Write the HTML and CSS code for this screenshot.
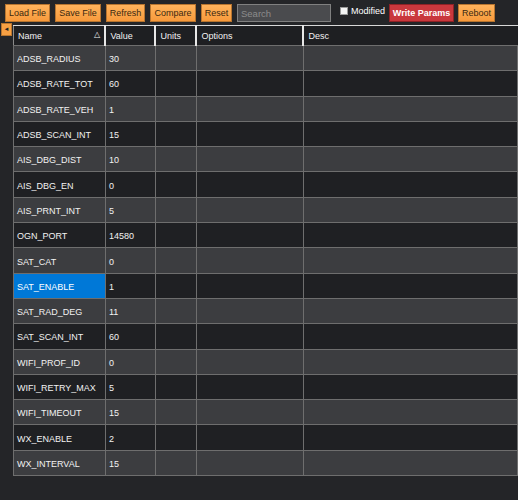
FILE: index.html
```html
<!DOCTYPE html>
<html lang="en">
<head>
    <meta charset="UTF-8">
    <meta name="viewport" content="width=device-width, initial-scale=1.0">
    <title>Full Parameter List</title>
    <link rel="stylesheet" href="styles.css">
</head>
<body>
    <div class="toolbar">
        <button class="btn btn-load">Load File</button>
        <button class="btn btn-save">Save File</button>
        <button class="btn btn-refresh">Refresh</button>
        <button class="btn btn-compare">Compare</button>
        <button class="btn btn-reset">Reset</button>
        <input type="text" class="search" placeholder="Search">
        <label class="modified"><span class="check"></span>Modified</label>
        <button class="btn btn-write">Write Params</button>
        <button class="btn btn-reboot">Reboot</button>
    </div>

    <div class="grid-area">
        <button class="collapse">&#9668;</button>
        <table class="params">
            <colgroup>
                <col class="col-name">
                <col class="col-value">
                <col class="col-units">
                <col class="col-options">
                <col>
            </colgroup>
            <thead>
                <tr>
                    <th class="sorted">Name <span class="sort">&#9651;</span></th>
                    <th>Value</th>
                    <th>Units</th>
                    <th>Options</th>
                    <th>Desc</th>
                </tr>
            </thead>
            <tbody>
                <tr><td>ADSB_RADIUS</td><td>30</td><td></td><td></td><td></td></tr>
                <tr><td>ADSB_RATE_TOT</td><td>60</td><td></td><td></td><td></td></tr>
                <tr><td>ADSB_RATE_VEH</td><td>1</td><td></td><td></td><td></td></tr>
                <tr><td>ADSB_SCAN_INT</td><td>15</td><td></td><td></td><td></td></tr>
                <tr><td>AIS_DBG_DIST</td><td>10</td><td></td><td></td><td></td></tr>
                <tr><td>AIS_DBG_EN</td><td>0</td><td></td><td></td><td></td></tr>
                <tr><td>AIS_PRNT_INT</td><td>5</td><td></td><td></td><td></td></tr>
                <tr><td>OGN_PORT</td><td>14580</td><td></td><td></td><td></td></tr>
                <tr><td>SAT_CAT</td><td>0</td><td></td><td></td><td></td></tr>
                <tr><td class="selected">SAT_ENABLE</td><td>1</td><td></td><td></td><td></td></tr>
                <tr><td>SAT_RAD_DEG</td><td>11</td><td></td><td></td><td></td></tr>
                <tr><td>SAT_SCAN_INT</td><td>60</td><td></td><td></td><td></td></tr>
                <tr><td>WIFI_PROF_ID</td><td>0</td><td></td><td></td><td></td></tr>
                <tr><td>WIFI_RETRY_MAX</td><td>5</td><td></td><td></td><td></td></tr>
                <tr><td>WIFI_TIMEOUT</td><td>15</td><td></td><td></td><td></td></tr>
                <tr><td>WX_ENABLE</td><td>2</td><td></td><td></td><td></td></tr>
                <tr><td>WX_INTERVAL</td><td>15</td><td></td><td></td><td></td></tr>
            </tbody>
        </table>
    </div>
</body>
</html>
```

FILE: styles.css
```css
* {
    margin: 0;
    padding: 0;
    box-sizing: border-box;
    font-family: 'Liberation Sans', Arial, sans-serif;
}

body {
    background: #242528;
    width: 518px;
    height: 500px;
    overflow: hidden;
}

.toolbar {
    display: flex;
    align-items: center;
    height: 23px;
    padding: 3px 0 0 5px;
}

.btn {
    height: 18px;
    background: linear-gradient(#ffb35c, #f79a3c);
    border: 1px solid #b8752f;
    color: #3a2810;
    font-size: 9px;
    cursor: pointer;
    margin-right: 5px;
}

.btn-load { width: 45px; }
.btn-save { width: 46px; margin-right: 5px; }
.btn-refresh { width: 39px; }
.btn-compare { width: 46px; }
.btn-reset { width: 31px; }
.btn-write { width: 65px; margin-right: 4px; }
.btn-reboot { width: 37px; }

.btn-write {
    background: #c9383d;
    border-color: #8e2226;
    color: #fff;
    font-weight: bold;
}

.search {
    width: 94px;
    height: 18px;
    background: #4a4b4e;
    border: 1px solid #808080;
    color: #ddd;
    font-size: 9.5px;
    padding-left: 3px;
    margin-right: 9px;
}

.search::placeholder {
    color: #8c8c8c;
}

.modified {
    display: flex;
    align-items: center;
    color: #fff;
    font-size: 9px;
    width: 49px;
    align-self: flex-start;
    margin-top: 3px;
}

.check {
    width: 8px;
    height: 8px;
    background: #f4f4f4;
    border: 1px solid #9a9a9a;
    margin-right: 3px;
}

.grid-area {
    display: flex;
    align-items: flex-start;
    padding-left: 1px;
}

.collapse {
    width: 11px;
    height: 13px;
    background: #f7a043;
    border: 1px solid #b8752f;
    color: #222;
    font-size: 6px;
    line-height: 11px;
    margin-right: 1px;
}

.params {
    width: 506px;
    border-collapse: collapse;
    table-layout: fixed;
    margin-top: 2px;
    color: #f2f2f2;
    font-size: 9px;
}

.col-name { width: 92px; }
.col-value { width: 50px; }
.col-units { width: 41px; }
.col-options { width: 107px; }

.params th {
    background: #1e1f22;
    height: 20px;
    text-align: left;
    font-weight: normal;
    padding: 1px 0 0 4px;
    border-top: 1px solid #d8d8d8;
    border-left: 2px solid #e8e8e8;
    border-bottom: 1px solid #6e6e6e;
}

.params th:first-child {
    border-left: 1px solid #8a8a8a;
}

.params th.sorted {
    position: relative;
}

.sort {
    position: absolute;
    right: 4px;
    top: 4px;
    font-size: 8px;
}

.params td {
    height: 25.3px;
    padding: 2px 0 0 3px;
    border: 1px solid #6e6e6e;
    white-space: nowrap;
    overflow: hidden;
}

.params tbody tr:nth-child(odd) td {
    background: #3c3d40;
}

.params tbody tr:nth-child(even) td {
    background: #1f2023;
}

.params tbody tr td.selected {
    background: #0078d7;
    color: #fff;
}
```
